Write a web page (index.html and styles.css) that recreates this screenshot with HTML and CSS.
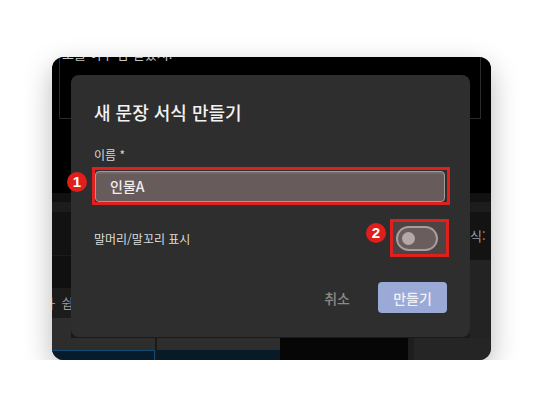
FILE: index.html
```html
<!DOCTYPE html>
<html lang="ko">

<head>
    <meta charset="UTF-8">
    <title>새 문장 서식 만들기</title>
    <link rel="stylesheet" href="styles.css">
</head>

<body>

    <div class="shot">
        <!-- app behind the dialog -->
        <div class="top">
            <div class="frame"><span class="frame-text">조를 이후 밤 달았지!</span></div>
        </div>
        <div class="band band-a"></div>
        <div class="band band-b"></div>
        <div class="middle">
            <div class="side-left">
                <div class="seg seg-1"></div>
                <div class="seg seg-2"></div>
                <div class="seg seg-3">ㅏ 쉽고</div>
                <div class="seg seg-4"></div>
            </div>
            <div class="center"></div>
            <div class="side-right">
                <div class="seg seg-r1">식:</div>
                <div class="seg seg-r2"></div>
            </div>
        </div>
        <div class="bottom">
            <div class="col col-a"><div class="tab-box"></div></div>
            <div class="col col-div"></div>
            <div class="col col-b"><div class="navy"></div></div>
            <div class="col col-c"></div>
            <div class="col col-d"></div>
            <div class="col col-e"></div>
        </div>

        <!-- dialog -->
        <div class="dialog">
            <h2 class="title">새 문장 서식 만들기</h2>
            <label class="label">이름 *</label>
            <div class="mark mark-input">
                <span class="badge badge-1">1</span>
                <div class="field">인물A</div>
            </div>
            <div class="row">
                <span class="row-label">말머리/말꼬리 표시</span>
                <div class="mark mark-toggle">
                    <span class="badge badge-2">2</span>
                    <div class="switch"><div class="knob"></div></div>
                </div>
            </div>
            <div class="actions">
                <button class="btn-text">취소</button>
                <button class="btn-primary">만들기</button>
            </div>
        </div>
    </div>

</body>

</html>
```

FILE: styles.css
```css
body {
    margin: 0;
    background: #fff;
    font-family: "Noto Sans CJK KR", "Noto Sans", sans-serif;
}

.shot {
    position: relative;
    width: 439px;
    height: 303px;
    margin: 57px 0 0 52px;
    border-radius: 12px;
    overflow: hidden;
    display: flex;
    flex-direction: column;
    background: #2d2d2d;
    box-shadow: 0 10px 28px rgba(0, 0, 0, 0.28);
}

/* background app */
.top {
    height: 136px;
    background: #000;
    padding: 0 10px 0 7px;
    flex-shrink: 0;
}

.frame {
    height: 61px;
    border: 1px solid #2a2a2a;
    border-top: none;
    padding-left: 2px;
    overflow: hidden;
}

.frame-text {
    display: block;
    margin-top: -12px;
    font-size: 13px;
    line-height: 18px;
    color: #c8c8c8;
}

.band { flex-shrink: 0; }
.band-a { height: 9px; background: #111; }
.band-b { height: 10px; background: #1c1c1c; }

.middle {
    height: 126px;
    display: flex;
    flex-shrink: 0;
}

.side-left {
    width: 19px;
    display: flex;
    flex-direction: column;
    overflow: hidden;
}

.seg-1 { height: 43px; background: #121212; border-bottom: 1px solid #1b1b1b; }
.seg-2 { height: 32px; background: #101010; }
.seg-3 {
    height: 30px;
    background: #1c1c1c;
    font-size: 13px;
    line-height: 30px;
    color: #9a9a9a;
    white-space: nowrap;
    text-indent: -6px;
}
.seg-4 { flex: 1; background: #2d2d2d; }

.center { flex: 1; background: #1a1a1a; }

.side-right {
    width: 21px;
    display: flex;
    flex-direction: column;
}

.seg-r1 {
    height: 48px;
    background: #131313;
    font-size: 13px;
    line-height: 48px;
    color: #9a9a9a;
    white-space: nowrap;
    overflow: hidden;
}
.seg-r2 { flex: 1; background: #232323; }

.bottom {
    flex: 1;
    display: flex;
}

.col-a { width: 103px; background: #2d2d2d; padding-top: 12px; }
.tab-box {
    height: 100%;
    background: #061b2b;
    border: 1px solid #0f4a75;
    border-left: none;
    border-bottom: none;
}
.col-div { width: 2px; background: #1a1a1a; }
.col-b { width: 123px; background: #2d2d2d; padding-top: 12px; }
.navy { height: 100%; background: #071a25; }
.col-c { width: 128px; background: #060606; }
.col-d { width: 6px; background: #1e1e1e; }
.col-e { flex: 1; background: #252525; }

/* dialog */
.dialog {
    position: absolute;
    left: 19px;
    top: 18px;
    width: 399px;
    box-sizing: border-box;
    padding: 25px 23px 24px 23px;
    background: #2e2e2e;
    border-radius: 8px;
    display: flex;
    flex-direction: column;
}

.title {
    margin: 0;
    font-size: 18px;
    line-height: 24px;
    font-weight: 500;
    color: #f2f2f2;
}

.label {
    margin-top: 23px;
    font-size: 12px;
    line-height: 16px;
    color: #d8d8d8;
}

.mark {
    position: relative;
    border: 3px solid #e0201e;
}

.mark-input {
    margin: 4px -3px 0 -2px;
    padding: 1px 2px 0 0;
}

.field {
    height: 31px;
    box-sizing: border-box;
    border: 1px solid #a49a9a;
    border-radius: 4px;
    background: #675b5b;
    box-shadow: inset 0 2px 0 #746868;
    padding-left: 14px;
    font-size: 14px;
    line-height: 29px;
    font-weight: 500;
    color: #f3eded;
}

.badge {
    position: absolute;
    width: 20px;
    height: 20px;
    border-radius: 50%;
    background: #e01f1c;
    color: #fff;
    font-family: "Liberation Sans", sans-serif;
    font-weight: 700;
    font-size: 15px;
    line-height: 20px;
    text-align: center;
}

.badge-1 { left: -28px; top: 2px; }
.badge-2 { left: -27px; top: 1px; }

.row {
    margin-top: 14px;
    display: flex;
    align-items: center;
    justify-content: space-between;
}

.row-label {
    font-size: 12px;
    color: #dcdcdc;
}

.mark-toggle {
    margin-right: -2px;
    padding: 4px 8px 3px 3px;
    background: #4e4343;
}

.switch {
    width: 42px;
    height: 25px;
    box-sizing: border-box;
    border: 2px solid #a99d9d;
    border-radius: 13px;
    background: #6a5d5d;
    display: flex;
    align-items: center;
    padding-left: 4px;
}

.knob {
    width: 13px;
    height: 13px;
    border-radius: 50%;
    background: #b5a8a8;
}

.actions {
    margin-top: 25px;
    display: flex;
    justify-content: flex-end;
    align-items: center;
    gap: 20px;
}

.actions button {
    font-family: inherit;
    font-size: 14px;
    font-weight: 500;
    border: none;
    cursor: pointer;
}

.btn-text {
    background: none;
    color: #8a8a8a;
    padding: 0 8px;
}

.btn-primary {
    width: 69px;
    height: 31px;
    border-radius: 4px;
    background: #9aa9d6;
    color: #eef1f8;
}
```
